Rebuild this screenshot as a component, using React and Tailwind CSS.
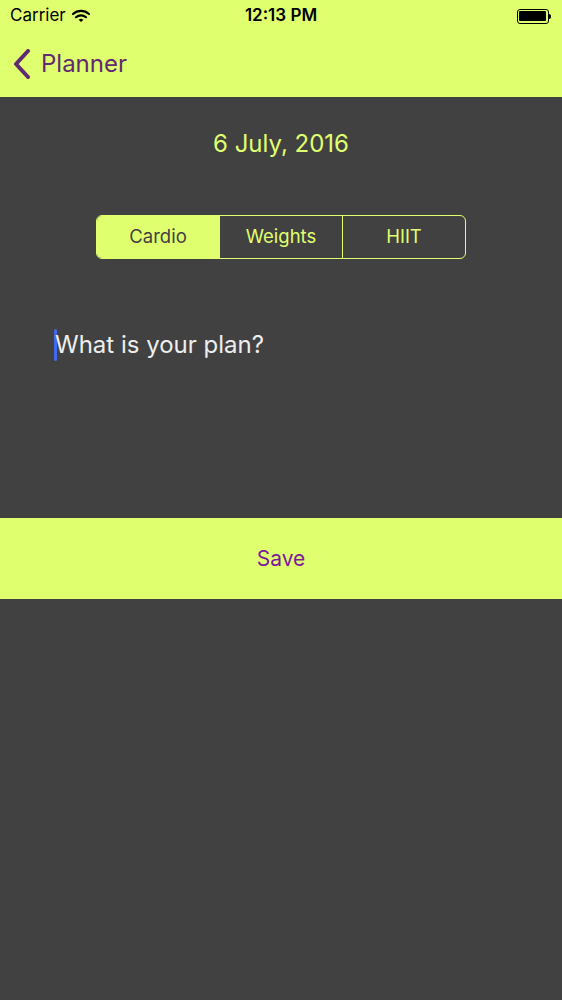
import React, { useState } from "react";

const segments = ["Cardio", "Weights", "HIIT"];

const App = () => {
  const [selected, setSelected] = useState("Cardio");
  const [plan, setPlan] = useState("");

  return (
    <div
      className="w-[562px] h-[1000px] bg-[#414141] flex flex-col"
      style={{ fontFamily: "Inter, 'Liberation Sans', sans-serif" }}
    >
      {/* Status bar + nav */}
      <div className="bg-[#e0ff6f] h-[97px] flex flex-col">
        <div className="h-[32px] flex items-center justify-between px-[10px] text-[17px] text-black">
          <div className="flex items-center gap-[6px] w-[150px]">
            <span>Carrier</span>
            <svg width="18" height="14" viewBox="0 0 18 14">
              <path d="M1 5 A12 12 0 0 1 17 5" stroke="#000" strokeWidth="2.2" fill="none" strokeLinecap="round" />
              <path d="M4 8.2 A7.5 7.5 0 0 1 14 8.2" stroke="#000" strokeWidth="2.2" fill="none" strokeLinecap="round" />
              <path d="M9 13 L6.6 10.8 A3.6 3.6 0 0 1 11.4 10.8 Z" fill="#000" />
            </svg>
          </div>
          <span className="font-semibold">12:13 PM</span>
          <div className="w-[150px] flex justify-end pr-[1px]">
            <div className="flex items-center">
              <div className="w-[32px] h-[15px] rounded-[3px] border border-black p-[1.5px]">
                <div className="w-full h-full bg-black rounded-[1px]" />
              </div>
              <div className="w-[2px] h-[5px] bg-black rounded-r-sm" />
            </div>
          </div>
        </div>
        <div className="flex-1 flex items-center pl-[12px] pb-[1px]">
          <svg width="20" height="30" viewBox="0 0 20 30" className="mr-[9px]">
            <path d="M16 2 L4 15 L16 28" stroke="#5f2a70" strokeWidth="4" fill="none" strokeLinecap="round" strokeLinejoin="round" />
          </svg>
          <span className="text-[24px] text-[#5f2a70]">Planner</span>
        </div>
      </div>

      {/* Content */}
      <div className="h-[421px] flex flex-col items-center">
        <div className="mt-[30px] text-[24px] text-[#e0ff6f] leading-[34px]">6 July, 2016</div>
        <div className="mt-[54px] w-[370px] h-[44px] flex rounded-[6px] border-[1.5px] border-[#e0ff6f] overflow-hidden">
          {segments.map((seg, i) => (
            <button
              key={seg}
              onClick={() => setSelected(seg)}
              className={`flex-1 flex items-center justify-center text-[18.5px] ${
                i > 0 ? "border-l-[1.5px] border-[#e0ff6f]" : ""
              } ${selected === seg ? "bg-[#e0ff6f] text-[#414141]" : "text-[#e0ff6f]"}`}
            >
              {seg}
            </button>
          ))}
        </div>
        <div className="self-stretch mt-[68px] pl-[54px] flex items-center">
          <div className="w-[3px] h-[32px] bg-[#4169f0] rounded-sm" />
          <input
            value={plan}
            onChange={(e) => setPlan(e.target.value)}
            placeholder="What is your plan?"
            className="flex-1 bg-transparent outline-none text-[24px] text-[#eeeeee] placeholder:text-[#eeeeee] -ml-[2px]"
          />
        </div>
      </div>

      {/* Save */}
      <button className="h-[81px] bg-[#e0ff6f] flex items-center justify-center text-[21px] text-[#7a1a98]">
        Save
      </button>
    </div>
  );
};

export default App;
